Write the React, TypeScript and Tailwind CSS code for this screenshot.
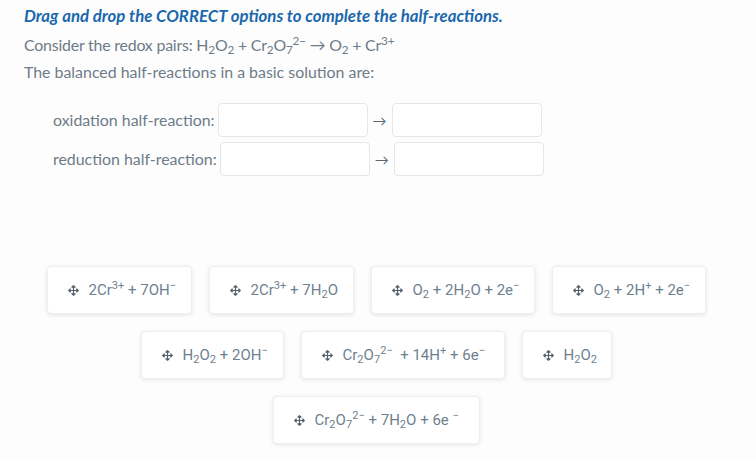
import React from 'react';
import { FaArrowsAlt } from 'react-icons/fa';

const Sub = ({ children }: { children: React.ReactNode }) => <sub className="text-[0.74em]">{children}</sub>;
const Sup = ({ children }: { children: React.ReactNode }) => <sup className="text-[0.74em]">{children}</sup>;

interface Option {
  id: string;
  width: string;
  body: React.ReactNode;
}

const options: Option[][] = [
  [
    { id: 'cr-oh', width: 'w-[145px]', body: <>2Cr<Sup>3+</Sup> + 7OH<Sup>−</Sup></> },
    { id: 'cr-h2o', width: 'w-[145px]', body: <>2Cr<Sup>3+</Sup> + 7H<Sub>2</Sub>O</> },
    { id: 'o2-h2o', width: 'w-[164px]', body: <>O<Sub>2</Sub> + 2H<Sub>2</Sub>O + 2e<Sup>−</Sup></> },
    { id: 'o2-h', width: 'w-[154px]', body: <>O<Sub>2</Sub> + 2H<Sup>+</Sup> + 2e<Sup>−</Sup></> },
  ],
  [
    { id: 'h2o2-oh', width: 'w-[143px]', body: <>H<Sub>2</Sub>O<Sub>2</Sub> + 2OH<Sup>−</Sup></> },
    { id: 'cr2o7-h', width: 'w-[204px]', body: <>Cr<Sub>2</Sub>O<Sub>7</Sub><Sup>2−</Sup>&nbsp; + 14H<Sup>+</Sup> + 6e<Sup>−</Sup></> },
    { id: 'h2o2', width: 'w-[90px]', body: <>H<Sub>2</Sub>O<Sub>2</Sub></> },
  ],
  [
    { id: 'cr2o7-h2o', width: 'w-[207px]', body: <>Cr<Sub>2</Sub>O<Sub>7</Sub><Sup>2−</Sup> + 7H<Sub>2</Sub>O + 6e <Sup>−</Sup></> },
  ],
];

function DropBox() {
  return <div className="h-[34px] w-[150px] rounded-[4px] border border-[#e6e6e6] bg-white" />;
}

function ReactionRow({ label }: { label: string }) {
  return (
    <div className="flex items-center">
      <span className="mr-[3px] text-[15.9px] text-[#6e7b88]">{label}</span>
      <DropBox />
      <span className="mx-[5px] text-[14px] text-[#5b6670]">→</span>
      <DropBox />
    </div>
  );
}

function OptionCard({ option }: { option: Option }) {
  return (
    <div
      className={`${option.width} flex h-[48px] items-center gap-[10px] rounded-[4px] border border-[#efefef] bg-white pl-[20px] shadow-[0_1px_4px_rgba(0,0,0,0.10)]`}
    >
      <FaArrowsAlt className="shrink-0 text-[11px] text-[#56606b]" />
      <span className="whitespace-nowrap font-['Roboto',sans-serif] text-[15px] text-[#6e7f90]">{option.body}</span>
    </div>
  );
}

export default function App() {
  return (
    <div className="min-h-[461px] w-[756px] bg-[#fdfdfd] font-['Lato',sans-serif]">
      <div className="pl-[24px] pt-[5px]">
        <h1 className="text-[16.8px] font-bold italic leading-[22px] text-[#1b68ad]">
          Drag and drop the CORRECT options to complete the half-reactions.
        </h1>
        <p className="mt-[4px] text-[15.9px] leading-[27px] tracking-[-0.2px] text-[#6e7b88]">
          Consider the redox pairs: H<Sub>2</Sub>O<Sub>2</Sub> + Cr<Sub>2</Sub>O<Sub>7</Sub><Sup>2−</Sup> → O<Sub>2</Sub> + Cr<Sup>3+</Sup>
        </p>
        <p className="text-[15.9px] leading-[27px] text-[#6e7b88]">The balanced half-reactions in a basic solution are:</p>

        <div className="ml-[29px] mt-[18px] flex flex-col gap-[5px]">
          <ReactionRow label="oxidation half-reaction:" />
          <ReactionRow label="reduction half-reaction:" />
        </div>
      </div>

      <div className="ml-[36px] mt-[90px] flex w-[680px] flex-wrap justify-center gap-[17px]">
        {options.flat().map((o) => (
          <OptionCard key={o.id} option={o} />
        ))}
      </div>
    </div>
  );
}
